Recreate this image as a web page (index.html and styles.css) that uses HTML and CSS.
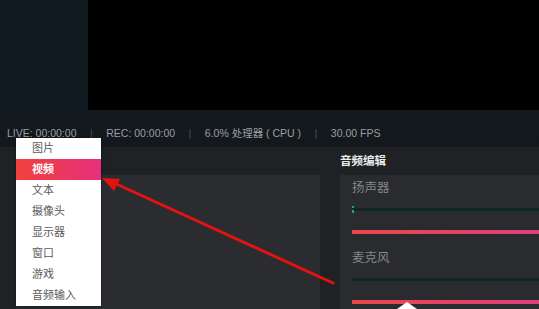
FILE: index.html
```html
<!DOCTYPE html>
<html>
<head>
<meta charset="utf-8">
<link rel="stylesheet" href="styles.css">
</head>
<body>
<div class="app">
  <div class="top">
    <div class="side"></div>
    <div class="preview"></div>
  </div>
  <div class="status">
    <span>LIVE: 00:00:00</span>
    <span class="sep">|</span>
    <span>REC: 00:00:00</span>
    <span class="sep">|</span>
    <span>6.0% 处理器 ( CPU )</span>
    <span class="sep">|</span>
    <span>30.00 FPS</span>
  </div>
  <div class="main">
    <div class="left-col">
      <div class="panel-left"></div>
    </div>
    <div class="right-col">
      <div class="title">音频编辑</div>
      <div class="audio-panel">
        <div class="label">扬声器</div>
        <div class="meter marked"></div>
        <div class="bar"></div>
        <div class="label second">麦克风</div>
        <div class="meter"></div>
        <div class="bar"></div>
      </div>
    </div>
  </div>
  <ul class="menu">
    <li>图片</li>
    <li class="active">视频</li>
    <li>文本</li>
    <li>摄像头</li>
    <li>显示器</li>
    <li>窗口</li>
    <li>游戏</li>
    <li>音频输入</li>
  </ul>
  <svg class="overlay" width="539" height="309" viewBox="0 0 539 309">
    <line x1="333" y1="283" x2="112" y2="182" stroke="#e51212" stroke-width="3" stroke-linecap="round"/>
    <polygon points="102,178 120,179 114,191" fill="#e51212"/>
    <polygon points="397,309 407,302 417,309" fill="#ffffff"/>
  </svg>
</div>
</body>
</html>
```
FILE: styles.css
```css
html, body {
  margin: 0;
  padding: 0;
  background: #1f2125;
}
.app {
  position: relative;
  width: 539px;
  height: 309px;
  overflow: hidden;
  font-family: "Liberation Sans", "Noto Sans CJK SC", sans-serif;
  background: #1f2125;
}
.top {
  display: flex;
  height: 110px;
  background: #101b21;
}
.side {
  width: 88px;
}
.preview {
  flex: 1;
  background: #000000;
}
.status {
  height: 37px;
  box-sizing: border-box;
  padding: 17px 0 0 7px;
  display: flex;
  gap: 13.5px;
  font-size: 10.5px;
  line-height: 12px;
  color: #9a9ea3;
  background: linear-gradient(#111b21 0, #13191e 8px, #14181d 100%);
  white-space: nowrap;
}
.status .sep {
  color: #4a4e53;
}
.main {
  display: flex;
  height: 162px;
  background: #1f2125;
}
.left-col {
  width: 320px;
  box-sizing: border-box;
  padding: 28px 0 0 16px;
  display: flex;
}
.panel-left {
  flex: 1;
  background: #2b2c30;
}
.right-col {
  flex: 1;
  margin-left: 20px;
  display: flex;
  flex-direction: column;
}
.title {
  height: 28px;
  line-height: 28px;
  font-size: 11.5px;
  font-weight: bold;
  color: #ececec;
}
.audio-panel {
  flex: 1;
  background: #2a2b2f;
  padding: 5px 0 0 12px;
}
.label {
  height: 16px;
  line-height: 16px;
  font-size: 12.5px;
  color: #84868a;
}
.label.second {
  margin-top: 16px;
}
.meter {
  position: relative;
  margin-top: 12px;
  height: 3px;
  background: #0d2824;
}
.meter.marked::before {
  content: "";
  position: absolute;
  left: 0;
  top: -2px;
  width: 2px;
  height: 7px;
  background: linear-gradient(#2f9d7e 0, #2f9d7e 2px, transparent 2px, transparent 4px, #2f9d7e 4px);
}
.bar {
  margin-top: 19px;
  height: 4px;
  background: linear-gradient(90deg, #e8474a, #e03f7c);
}
.menu {
  position: absolute;
  left: 16px;
  top: 138px;
  width: 85px;
  margin: 0;
  padding: 0;
  list-style: none;
  background: #ffffff;
  box-shadow: 0 1px 3px rgba(0, 0, 0, 0.4);
}
.menu li {
  height: 21px;
  line-height: 21px;
  padding-left: 16px;
  font-size: 11px;
  color: #5a5a5a;
}
.menu li.active {
  color: #ffffff;
  font-weight: bold;
  background: linear-gradient(90deg, #f0413d, #e6307d);
}
.overlay {
  position: absolute;
  left: 0;
  top: 0;
  pointer-events: none;
}
```
